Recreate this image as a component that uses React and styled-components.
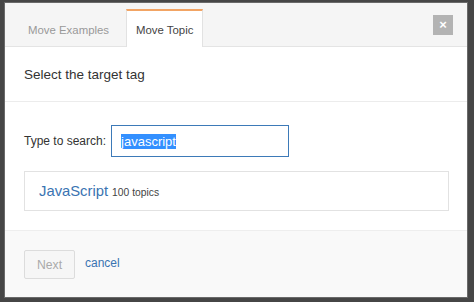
import React from 'react'
import styled, { createGlobalStyle } from 'styled-components'

const GlobalStyle = createGlobalStyle`
  html, body {
    margin: 0;
    padding: 0;
    background: #454545;
    font-family: "Liberation Sans", Arial, sans-serif;
  }
  ::selection {
    background: #3390ff;
    color: #fff;
  }
`

/* STYLES */
const Page = styled.div`
  width: 474px;
  height: 302px;
  padding: 3px 7px 5px 5px;
  box-sizing: border-box;
  background: #464646;
`

const Dialog = styled.div`
  display: flex;
  flex-direction: column;
  width: 462px;
  height: 294px;
  background: #fff;
  box-shadow: 0 0 0 1px #6a6a6a;
  overflow: hidden;
`

const Header = styled.div`
  display: flex;
  align-items: flex-end;
  gap: 4px;
  height: 44px;
  padding: 0 14px 0 10px;
  box-sizing: border-box;
  background: #f5f5f5;
  border-bottom: 1px solid #e4e4e4;
`

const Tab = styled.div`
  display: flex;
  align-items: center;
  height: 38px;
  padding: 1px ${p => (p.$active ? 9 : 12)}px 0;
  margin-bottom: -1px;
  box-sizing: border-box;
  font-size: 11.4px;
  color: ${p => (p.$active ? '#444' : '#999')};
  background: ${p => (p.$active ? '#fff' : 'transparent')};
  border: 1px solid ${p => (p.$active ? '#e2e2e2' : 'transparent')};
  border-top: 2px solid ${p => (p.$active ? '#f2a464' : 'transparent')};
  border-bottom: none;
`

const Spacer = styled.div`
  flex: 1;
`

const Close = styled.button`
  align-self: flex-start;
  margin-top: 12px;
  width: 20px;
  height: 20px;
  padding: 0;
  border: none;
  background: #b3b3b3;
  color: #fff;
  font-family: "Liberation Sans", Arial, sans-serif;
  font-size: 13px;
  font-weight: bold;
  line-height: 20px;
  cursor: pointer;
`

const Title = styled.div`
  height: 54px;
  display: flex;
  align-items: center;
  padding: 0 19px;
  font-size: 13.5px;
  color: #333;
  border-bottom: 1px solid #ececec;
`

const Body = styled.div`
  padding: 23px 18px 19px 19px;
  display: flex;
  flex-direction: column;
  gap: 14px;
`

const SearchRow = styled.label`
  display: flex;
  align-items: center;
  gap: 5px;
  font-size: 12px;
  color: #333;
`

const Input = styled.input`
  width: 178px;
  height: 32px;
  box-sizing: border-box;
  padding: 0 9px;
  border: 1px solid #3d7ab8;
  outline: none;
  font-family: "Liberation Sans", Arial, sans-serif;
  font-size: 13px;
  color: #333;
`

const Result = styled.div`
  height: 40px;
  display: flex;
  align-items: center;
  gap: 4px;
  padding: 0 14px;
  box-sizing: border-box;
  border: 1px solid #e2e2e2;
`

const TagName = styled.span`
  font-size: 14.8px;
  color: #3a74b2;
`

const TagCount = styled.span`
  font-size: 10.3px;
  color: #444;
  padding-top: 2px;
`

const Footer = styled.div`
  flex: 1;
  display: flex;
  align-items: flex-start;
  gap: 10px;
  padding: 19px 19px 0;
  background: #f9f9f9;
  border-top: 1px solid #eeeeee;
`

const Button = styled.button`
  width: 51px;
  height: 29px;
  border: 1px solid #dcdcdc;
  border-radius: 2px;
  background: #f6f6f6;
  color: #aaa;
  font-family: "Liberation Sans", Arial, sans-serif;
  font-size: 12.2px;
  padding: 0;
`

const Link = styled.a`
  font-size: 12px;
  line-height: 26px;
  color: #3a74b2;
  text-decoration: none;
`

/* PRESENTATION */
export default class App extends React.Component {
  inputRef = React.createRef()

  componentDidMount() {
    const input = this.inputRef.current
    if (input) {
      input.focus()
      input.select()
    }
  }

  render() {
    return (
      <Page>
        <GlobalStyle />
        <Dialog>
          <Header>
            <Tab>Move Examples</Tab>
            <Tab $active>Move Topic</Tab>
            <Spacer />
            <Close>×</Close>
          </Header>
          <Title>Select the target tag</Title>
          <Body>
            <SearchRow>
              Type to search:
              <Input ref={this.inputRef} defaultValue="javascript" />
            </SearchRow>
            <Result>
              <TagName>JavaScript</TagName>
              <TagCount>100 topics</TagCount>
            </Result>
          </Body>
          <Footer>
            <Button disabled>Next</Button>
            <Link href="#">cancel</Link>
          </Footer>
        </Dialog>
      </Page>
    )
  }
}
